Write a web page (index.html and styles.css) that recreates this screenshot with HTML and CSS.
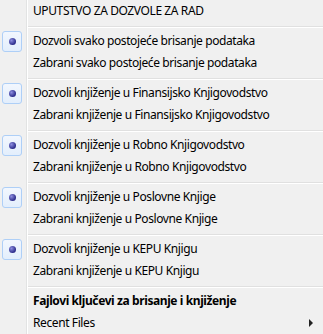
FILE: index.html
```html
<!DOCTYPE html>
<html>
<head>
    <title>Meni dozvola</title>
    <meta charset="utf-8">
    <link rel="stylesheet" href="styles.css">
</head>
<body>
    <ul class="menu">
        <li class="item"><span class="gutter"></span><span class="label">UPUTSTVO ZA DOZVOLE ZA RAD</span></li>
        <li class="sep"><span class="gutter"></span><span class="line"></span></li>
        <li class="item"><span class="gutter"><span class="check"><span class="dot"></span></span></span><span class="label">Dozvoli svako postojeće brisanje podataka</span></li>
        <li class="item"><span class="gutter"></span><span class="label">Zabrani svako postojeće brisanje podataka</span></li>
        <li class="sep"><span class="gutter"></span><span class="line"></span></li>
        <li class="item"><span class="gutter"><span class="check"><span class="dot"></span></span></span><span class="label">Dozvoli knjiženje u Finansijsko Knjigovodstvo</span></li>
        <li class="item"><span class="gutter"></span><span class="label">Zabrani knjiženje u Finansijsko Knjigovodstvo</span></li>
        <li class="sep"><span class="gutter"></span><span class="line"></span></li>
        <li class="item"><span class="gutter"><span class="check"><span class="dot"></span></span></span><span class="label">Dozvoli knjiženje u Robno Knjigovodstvo</span></li>
        <li class="item"><span class="gutter"></span><span class="label">Zabrani knjiženje u Robno Knjigovodstvo</span></li>
        <li class="sep"><span class="gutter"></span><span class="line"></span></li>
        <li class="item"><span class="gutter"><span class="check"><span class="dot"></span></span></span><span class="label">Dozvoli knjiženje u Poslovne Knjige</span></li>
        <li class="item"><span class="gutter"></span><span class="label">Zabrani knjiženje u Poslovne Knjige</span></li>
        <li class="sep"><span class="gutter"></span><span class="line"></span></li>
        <li class="item"><span class="gutter"><span class="check"><span class="dot"></span></span></span><span class="label">Dozvoli knjiženje u KEPU Knjigu</span></li>
        <li class="item"><span class="gutter"></span><span class="label">Zabrani knjiženje u KEPU Knjigu</span></li>
        <li class="sep"><span class="gutter"></span><span class="line"></span></li>
        <li class="item"><span class="gutter"></span><span class="label bold">Fajlovi ključevi za brisanje i knjiženje</span></li>
        <li class="item"><span class="gutter"></span><span class="label">Recent Files</span><span class="arrow"></span></li>
    </ul>
</body>
</html>
```

FILE: styles.css
```css
html, body {
    margin: 0;
    background-color: #f0f0f0;
}
.menu {
    list-style: none;
    margin: 0;
    padding: 0;
    width: 323px;
    font-family: "Noto Sans", "Liberation Sans", sans-serif;
    font-size: 12px;
    letter-spacing: -0.4px;
    color: #000;
}
.item, .sep {
    display: flex;
    align-items: stretch;
}
.item {
    height: 22px;
}
.sep {
    height: 8px;
}
.gutter {
    width: 26px;
    flex: none;
    border-right: 1px solid #e2e3e3;
    box-shadow: 1px 0 0 #fff;
}
.label {
    flex: 1;
    padding-left: 6px;
    line-height: 22px;
    white-space: nowrap;
}
.bold {
    font-weight: bold;
}
.line {
    flex: 1;
    margin: 4px 0 0 1px;
    height: 1px;
    background-color: #e0e0e0;
    border-bottom: 1px solid #fff;
}
.check {
    display: flex;
    align-items: center;
    justify-content: center;
    width: 18px;
    height: 19px;
    margin: 1px 0 0 2px;
    border: 1px solid #aecff7;
    border-radius: 3px;
    background: linear-gradient(#f2f7fe, #e3eefc);
}
.dot {
    width: 7px;
    height: 7px;
    border-radius: 50%;
    background: radial-gradient(circle at 35% 35%, #8d8ee0, #2b2b8a 70%);
}
.arrow {
    width: 0;
    height: 0;
    align-self: center;
    margin-right: 10px;
    border-top: 4px solid transparent;
    border-bottom: 4px solid transparent;
    border-left: 4px solid #222;
}
```
